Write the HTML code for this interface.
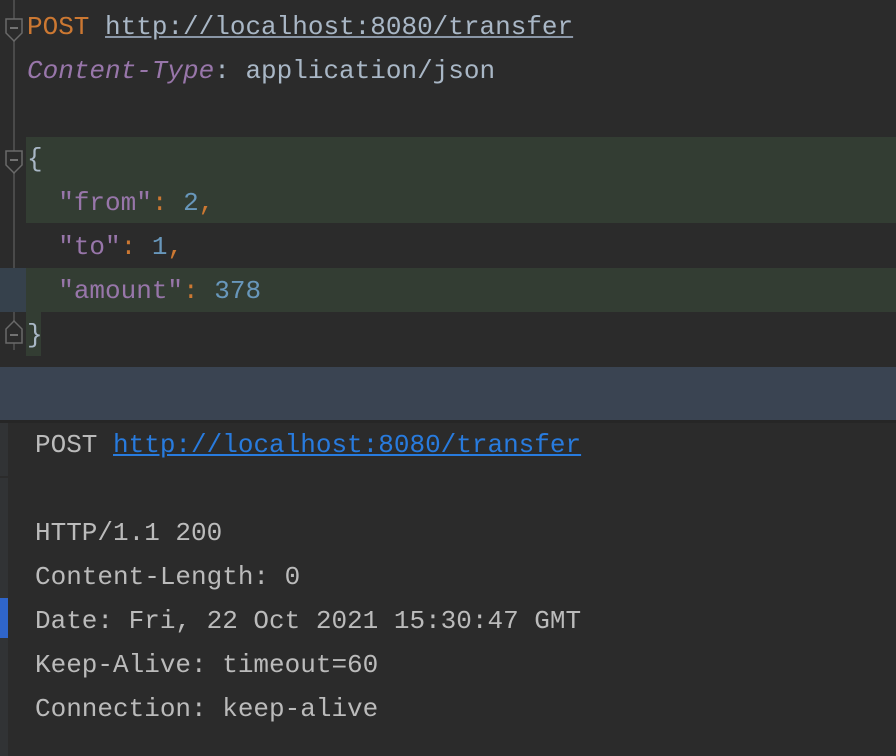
<!DOCTYPE html>
<html><head><meta charset="utf-8"><style>
*{margin:0;padding:0;box-sizing:border-box}
body{width:896px;height:756px;background:#2b2b2b;overflow:hidden;position:relative;font-family:"Liberation Mono",monospace;font-size:26px;}
.ln{position:absolute;left:27px;height:44px;line-height:44px;white-space:pre;color:#a9b7c6}
.o{color:#cc7832}.p{color:#9876aa}.n{color:#6897bb}.u{color:#a9b7c6;text-decoration:underline;text-decoration-color:#8a96a6}
.g{position:absolute;background:#333d33}
.b{color:#bbbbbb;left:35px}
.bl{color:#287bde;text-decoration:underline}
</style></head><body>
<div style="position:absolute;left:13px;top:0;width:2px;height:350px;background:#4a4a4a"></div>
<div class="g" style="left:26px;top:137px;width:870px;height:86px"></div>
<div class="g" style="left:26px;top:268px;width:870px;height:44px"></div>
<div style="position:absolute;left:0;top:268px;width:26px;height:44px;background:#36414c"></div>
<div class="g" style="left:26px;top:312px;width:15px;height:44px"></div>
<svg style="position:absolute;left:0;top:0" width="26" height="360">
<g fill="#2b2b2b" stroke="#6a6a6a" stroke-width="1.5">
<path d="M6 19h16v14l-8 8l-8-8z"/><path d="M6 151h16v14l-8 8l-8-8z"/><path d="M6 343h16v-14l-8-8l-8 8z"/>
</g><g stroke="#8a8a8a" stroke-width="1.5"><path d="M10 28h8M10 160h8M10 335h8"/></g></svg>
<div class="ln" style="top:5px"><span class="o">POST</span> <span class="u">http://localhost:8080/transfer</span></div>
<div class="ln" style="top:49px"><span class="p" style="font-style:italic">Content-Type</span>: application/json</div>
<div class="ln" style="top:137px">{</div>
<div class="ln" style="top:181px">  <span class="p">"from"</span><span class="o">:</span> <span class="n">2</span><span class="o">,</span></div>
<div class="ln" style="top:225px">  <span class="p">"to"</span><span class="o">:</span> <span class="n">1</span><span class="o">,</span></div>
<div class="ln" style="top:269px">  <span class="p">"amount"</span><span class="o">:</span> <span class="n">378</span></div>
<div class="ln" style="top:313px">}</div>
<div style="position:absolute;left:0;top:367px;width:896px;height:53px;background:#3a4452"></div>
<div style="position:absolute;left:0;top:420px;width:896px;height:3px;background:#262626"></div>
<div style="position:absolute;left:0;top:423px;width:8px;height:333px;background:#313335"></div>
<div style="position:absolute;left:0;top:476px;width:8px;height:2px;background:#2b2b2b"></div>
<div style="position:absolute;left:0;top:598px;width:8px;height:40px;background:#2f65ca"></div>
<div class="ln b" style="top:423px">POST <span class="bl">http://localhost:8080/transfer</span></div>
<div class="ln b" style="top:511px">HTTP/1.1 200</div>
<div class="ln b" style="top:555px">Content-Length: 0</div>
<div class="ln b" style="top:599px">Date: Fri, 22 Oct 2021 15:30:47 GMT</div>
<div class="ln b" style="top:643px">Keep-Alive: timeout=60</div>
<div class="ln b" style="top:687px">Connection: keep-alive</div>
</body></html>
